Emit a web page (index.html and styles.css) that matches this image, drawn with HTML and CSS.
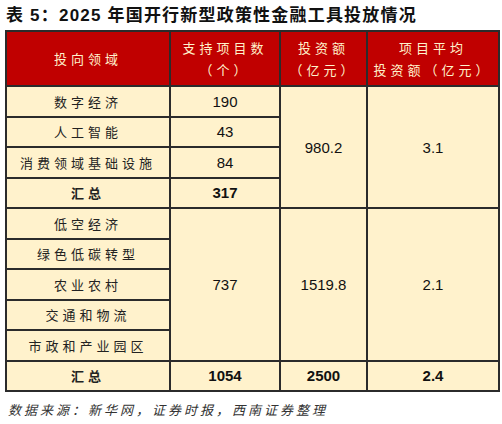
FILE: index.html
```html
<!DOCTYPE html>
<html lang="zh-CN">
<head>
    <meta charset="UTF-8">
    <title>表 5：2025 年国开行新型政策性金融工具投放情况</title>
    <link rel="stylesheet" href="styles.css">
</head>
<body>

    <h1 class="title">表 5：2025 年国开行新型政策性金融工具投放情况</h1>

    <!-- Main data table -->
    <table class="data-table">
        <colgroup>
            <col class="col-area">
            <col class="col-count">
            <col class="col-amount">
            <col class="col-avg">
        </colgroup>
        <thead>
            <tr>
                <th>投向领域</th>
                <th>支持项目数<br>（个）</th>
                <th>投资额<br>（亿元）</th>
                <th>项目平均<br>投资额（亿元）</th>
            </tr>
        </thead>
        <tbody>
            <tr>
                <td class="label">数字经济</td>
                <td>190</td>
                <td rowspan="4">980.2</td>
                <td rowspan="4">3.1</td>
            </tr>
            <tr>
                <td class="label">人工智能</td>
                <td>43</td>
            </tr>
            <tr>
                <td class="label">消费领域基础设施</td>
                <td>84</td>
            </tr>
            <tr class="total">
                <td class="label">汇总</td>
                <td>317</td>
            </tr>
            <tr>
                <td class="label">低空经济</td>
                <td rowspan="5">737</td>
                <td rowspan="5">1519.8</td>
                <td rowspan="5">2.1</td>
            </tr>
            <tr>
                <td class="label">绿色低碳转型</td>
            </tr>
            <tr>
                <td class="label">农业农村</td>
            </tr>
            <tr>
                <td class="label">交通和物流</td>
            </tr>
            <tr>
                <td class="label">市政和产业园区</td>
            </tr>
            <tr class="total">
                <td class="label">汇总</td>
                <td>1054</td>
                <td>2500</td>
                <td>2.4</td>
            </tr>
        </tbody>
    </table>

    <p class="source">数据来源：新华网，证券时报，西南证券整理</p>

</body>
</html>
```

FILE: styles.css
```css
/* Page */
body {
    margin: 0;
    padding: 0 4px 0 5px;
    background-color: #ffffff;
    color: #1a1a1a;
    font-family: "Liberation Sans", "Noto Sans CJK SC", sans-serif;
}

/* Title */
.title {
    margin: 0;
    padding: 5px 0 0 1px;
    height: 25px;
    font-size: 17px;
    font-weight: bold;
    letter-spacing: 1.2px;
    color: #111;
    line-height: 22px;
}

/* Table */
.data-table {
    width: 493px;
    border-collapse: collapse;
    border: 2px solid #3a3a3a;
    table-layout: fixed;
    background-color: #fff2cc;
}

.col-area { width: 164px; }
.col-count { width: 110px; }
.col-amount { width: 87px; }
.col-avg { width: 132px; }

.data-table th {
    height: 53px;
    padding: 0;
    background-color: #c00000;
    color: #fff2cc;
    font-family: "Noto Sans CJK SC", sans-serif;
    font-size: 13px;
    font-weight: normal;
    letter-spacing: 4px;
    line-height: 22px;
    border: 2px solid #2b2b2b;
}

.data-table td {
    height: 28.5px;
    padding: 0;
    text-align: center;
    font-size: 15px;
    color: #111;
    border: 2px solid #2b2b2b;
}

.data-table td.label {
    font-family: "Noto Sans CJK SC", sans-serif;
    font-size: 13px;
    letter-spacing: 4px;
    color: #222;
}

.data-table tr.total td {
    font-weight: bold;
}

/* Source note */
.source {
    margin: 8px 0 0 3px;
    font-family: "Noto Sans CJK SC", sans-serif;
    font-size: 13px;
    font-style: italic;
    letter-spacing: 3px;
    color: #333;
}
```
